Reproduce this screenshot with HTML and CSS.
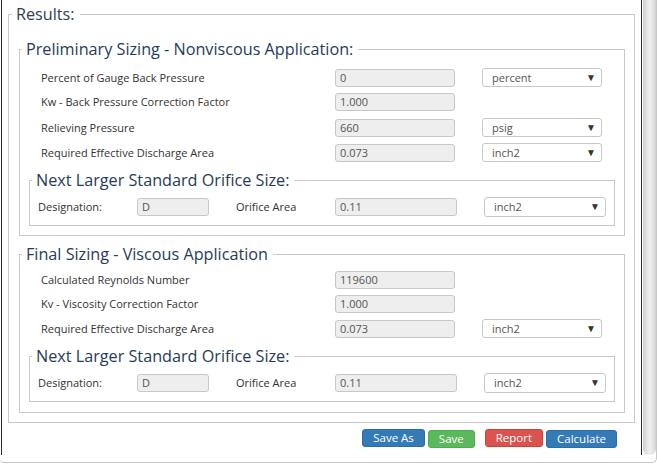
FILE: index.html
```html
<!DOCTYPE html>
<html>
<head>
<meta charset="utf-8">
<link rel="stylesheet" href="styles.css">
</head>
<body>
<div class="frame">
  <div class="pane">
    <fieldset class="fs results">
      <legend class="lg lg-results">Results:</legend>
      <div class="results-body">
        <fieldset class="fs section prelim">
          <legend class="lg lg-section">Preliminary Sizing - Nonviscous Application:</legend>
          <div class="section-body">
            <div class="rows rows-prelim">
              <div class="row">
                <span class="lbl">Percent of Gauge Back Pressure</span>
                <span class="cell"><span class="inp">0</span></span>
                <span class="sel">percent<span class="arrow">▼</span></span>
              </div>
              <div class="row">
                <span class="lbl">Kw - Back Pressure Correction Factor</span>
                <span class="cell"><span class="inp">1.000</span></span>
              </div>
              <div class="row">
                <span class="lbl">Relieving Pressure</span>
                <span class="cell"><span class="inp">660</span></span>
                <span class="sel">psig<span class="arrow">▼</span></span>
              </div>
              <div class="row">
                <span class="lbl">Required Effective Discharge Area</span>
                <span class="cell"><span class="inp">0.073</span></span>
                <span class="sel">inch2<span class="arrow">▼</span></span>
              </div>
            </div>
            <fieldset class="fs sub sub1">
              <legend class="lg lg-sub">Next Larger Standard Orifice Size:</legend>
              <div class="subrow">
                <span class="lbl">Designation:</span>
                <span class="cell"><span class="inp inp-d">D</span></span>
                <span class="lbl">Orifice Area</span>
                <span class="cell"><span class="inp inp-w">0.11</span></span>
                <span class="sel sel-w">inch2<span class="arrow">▼</span></span>
              </div>
            </fieldset>
          </div>
        </fieldset>

        <fieldset class="fs section final">
          <legend class="lg lg-section">Final Sizing - Viscous Application</legend>
          <div class="section-body">
            <div class="rows rows-final">
              <div class="row">
                <span class="lbl">Calculated Reynolds Number</span>
                <span class="cell"><span class="inp">119600</span></span>
              </div>
              <div class="row">
                <span class="lbl">Kv - Viscosity Correction Factor</span>
                <span class="cell"><span class="inp">1.000</span></span>
              </div>
              <div class="row">
                <span class="lbl">Required Effective Discharge Area</span>
                <span class="cell"><span class="inp">0.073</span></span>
                <span class="sel">inch2<span class="arrow">▼</span></span>
              </div>
            </div>
            <fieldset class="fs sub sub2">
              <legend class="lg lg-sub">Next Larger Standard Orifice Size:</legend>
              <div class="subrow">
                <span class="lbl">Designation:</span>
                <span class="cell"><span class="inp inp-d">D</span></span>
                <span class="lbl">Orifice Area</span>
                <span class="cell"><span class="inp inp-w">0.11</span></span>
                <span class="sel sel-w">inch2<span class="arrow">▼</span></span>
              </div>
            </fieldset>
          </div>
        </fieldset>
      </div>
    </fieldset>
    <div class="actions">
      <span class="btn btn-blue">Save As</span>
      <span class="btn btn-green">Save</span>
      <span class="btn btn-red">Report</span>
      <span class="btn btn-blue btn-calc">Calculate</span>
    </div>
  </div>
  <div class="scrollbar"></div>
</div>
</body>
</html>
```

FILE: styles.css
```css
* { box-sizing: border-box; }
html, body { margin: 0; padding: 0; background: #fff; }
body {
  font-family: "Open Sans", "Liberation Sans", sans-serif;
  color: #333;
  width: 657px;
  height: 464px;
  overflow: hidden;
}
.frame {
  display: flex;
  align-items: flex-start;
  width: 657px;
  height: 463px;
  border-right: 1px solid #c8c8c8;
  border-bottom: 1px solid #c8c8c8;
  border-bottom-right-radius: 5px;
  border-bottom-left-radius: 4px;
}
.pane {
  width: 641px;
  height: 455px;
  margin-left: 1px;
  border-left: 1px solid #2b2b2b;
  border-right: 1px solid #2b2b2b;
}
.scrollbar {
  width: 13px;
  height: 455px;
  margin-left: 1px;
  border-radius: 0 0 6px 6px;
  background: linear-gradient(to right, #cdcdcd 0%, #e2e2e2 25%, #efefef 50%, #e6e6e6 75%, #d0d0d0 100%);
}
.fs {
  margin: 0;
  padding: 0;
  min-width: 0;
  border: 1px solid #c9c9c9;
}
.lg {
  font-size: 16.2px;
  line-height: 22px;
  padding: 0 5px 0 4px;
  color: #263c58;
  font-weight: 400;
}
.results { margin: 3px 6px 0 6px; }
.lg-results { margin-left: 3px; color: #2e3e52; }
.results-body { padding: 0 9px 9px 10px; }
.section { margin-top: 13px; }
.final { margin-top: 7px; }
.lg-section { margin-left: 2px; }
.section-body { padding: 0 9px 9px 9px; }
.final .section-body { padding-bottom: 10px; }
.rows { display: flex; flex-direction: column; padding-left: 12px; }
.rows-prelim { padding-top: 8px; gap: 7px; }
.rows-final { padding-top: 6px; gap: 6px; }
.row {
  display: grid;
  grid-template-columns: 294px 147px 120px;
  align-items: center;
  height: 18px;
}
.lbl { font-size: 11px; color: #333; white-space: nowrap; }
.row .lbl { margin-top: -1px; }
.inp {
  display: block;
  height: 18px;
  width: 120px;
  background: #eee;
  border: 1px solid #c8c8c8;
  border-radius: 3px;
  font-size: 11px;
  line-height: 15px;
  padding-left: 4px;
  color: #555;
}
.sel {
  position: relative;
  display: block;
  height: 19px;
  width: 120px;
  background: #fff;
  border: 1px solid #c8c8c8;
  border-radius: 3px;
  font-size: 11px;
  line-height: 18px;
  padding-left: 9px;
  color: #555;
}
.arrow {
  position: absolute;
  right: 5px;
  top: 0;
  font-size: 10px;
  line-height: 17px;
  color: #333;
}
.sub { margin-top: 8px; }
.lg-sub { margin-left: 2px; }
.subrow {
  display: grid;
  grid-template-columns: 99px 99px 99px 149px 122px;
  align-items: center;
  padding: 6px 0 8px 8px;
  height: 34px;
}
.subrow .lbl { margin-top: -2px; }
.inp-d { width: 72px; }
.inp-w { width: 122px; }
.sel-w { width: 122px; height: 20px; }
.actions {
  display: flex;
  justify-content: flex-end;
  padding: 6px 24px 0 0;
  gap: 3px;
}
.btn {
  display: block;
  height: 18px;
  font-size: 11.5px;
  line-height: 16px;
  color: #fff;
  border-radius: 3px;
  padding: 0 10px;
  border: 1px solid transparent;
}
.btn-blue { background: #337ab7; border-color: #2e6da4; }
.btn-green { background: #5cb85c; border-color: #4cae4c; margin-top: 1px; }
.btn-red { background: #d9534f; border-color: #d43f3a; margin-left: 7px; }
.btn-calc { margin-top: 1px; }
```
